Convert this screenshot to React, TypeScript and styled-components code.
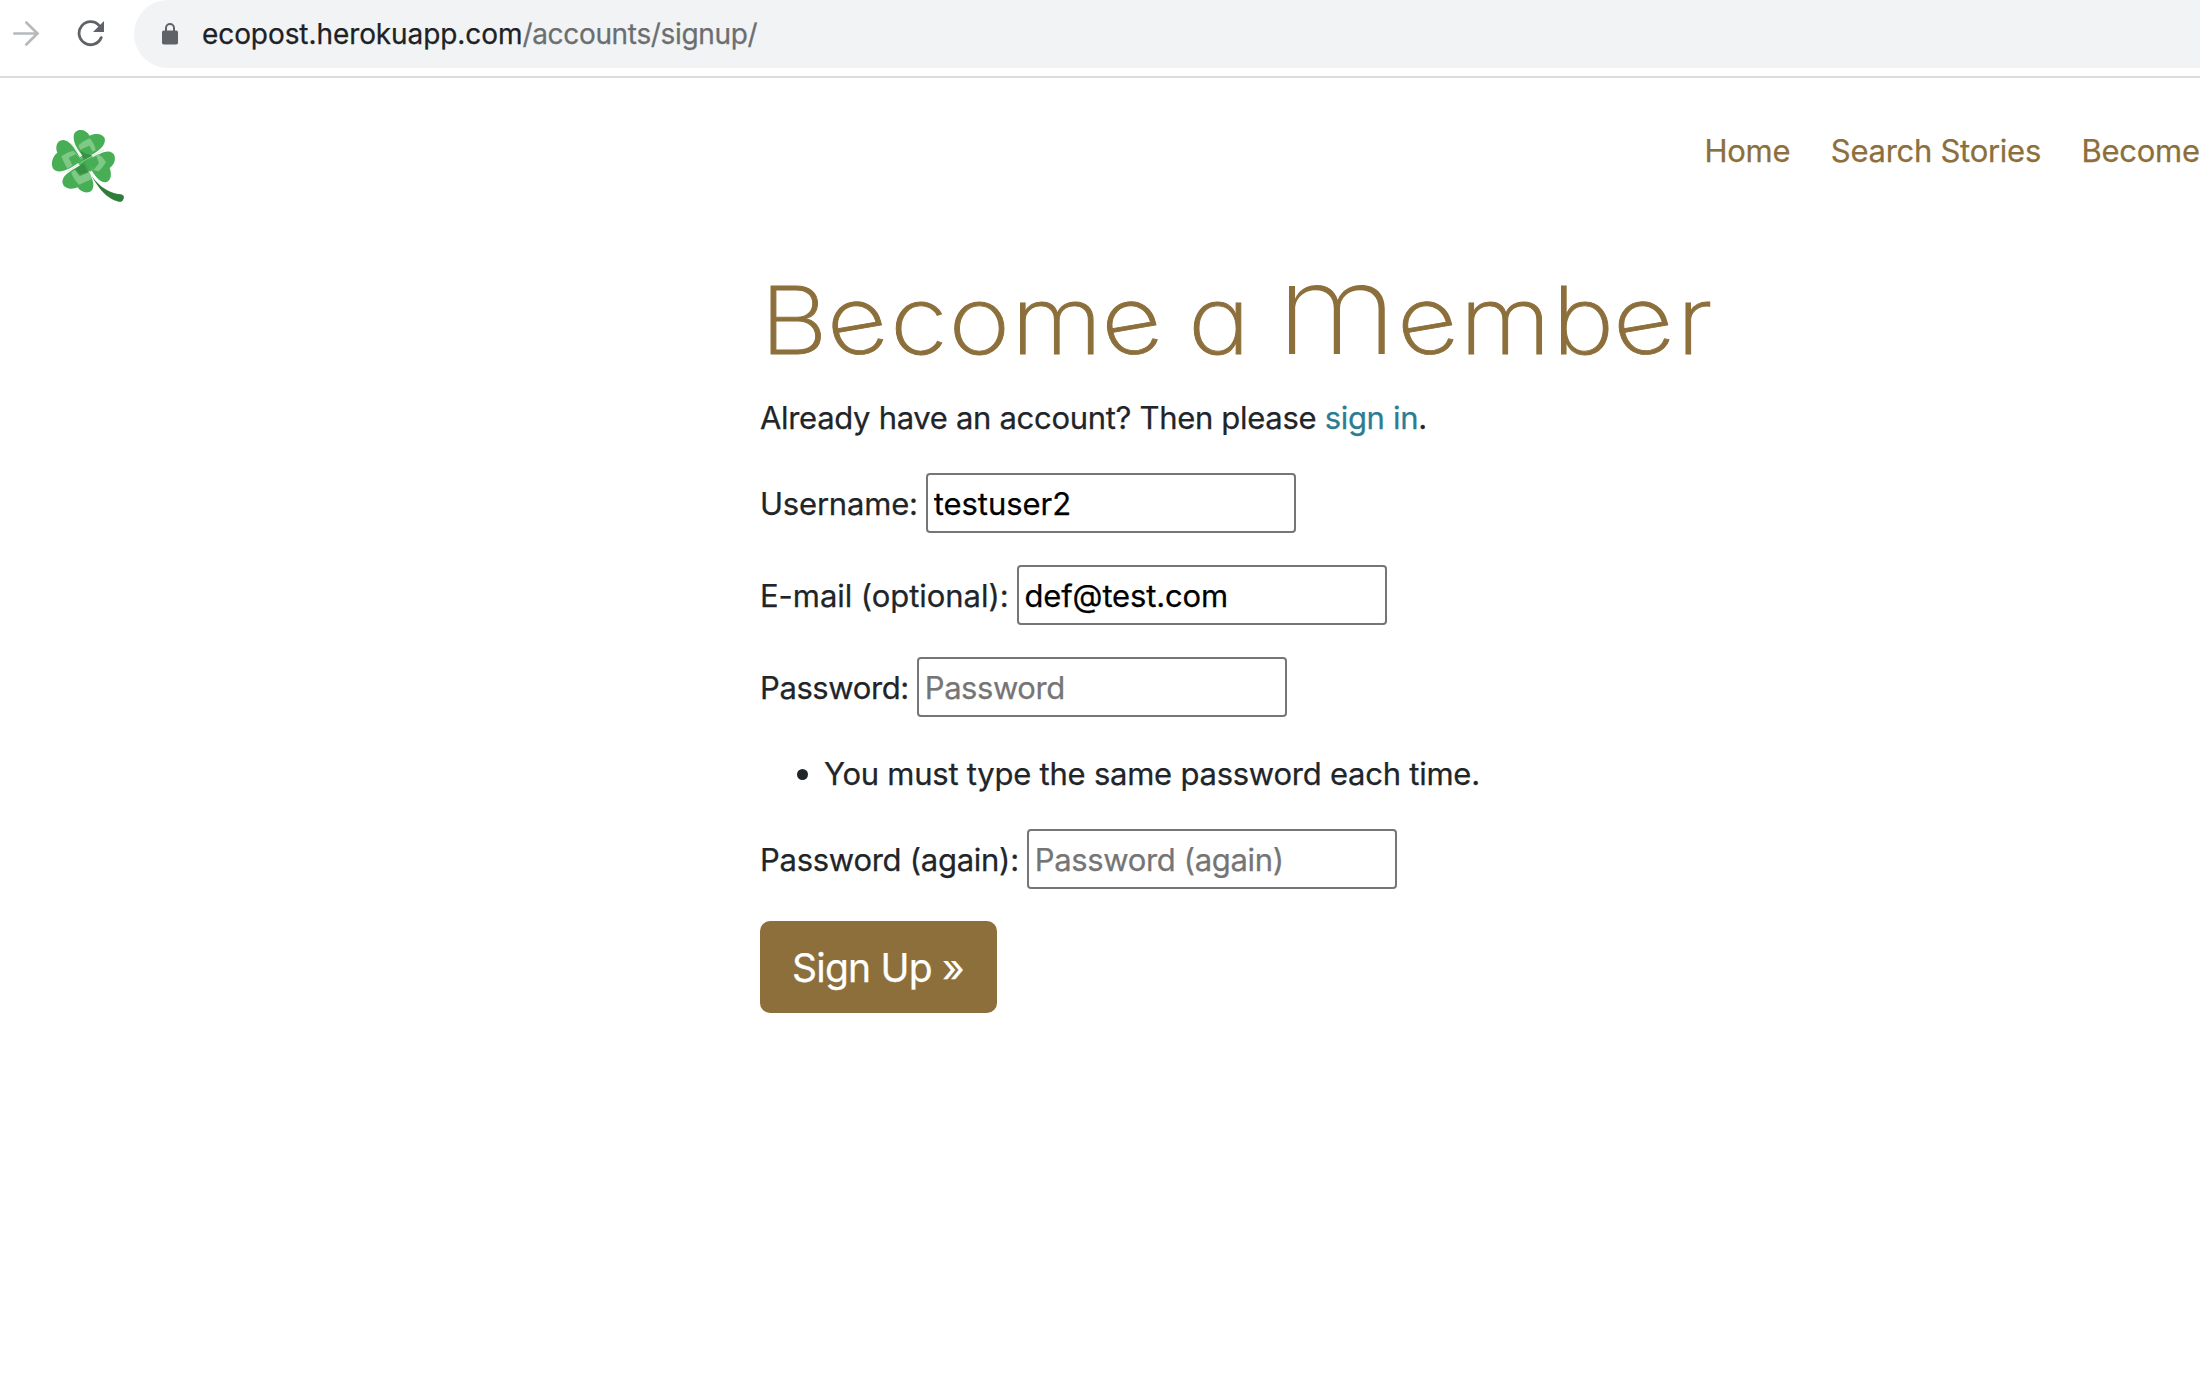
import React from "react";
import styled, { createGlobalStyle } from "styled-components";

const GOLD = "#8c6f3b";

const GlobalStyle = createGlobalStyle`
  *, *::before, *::after { box-sizing: border-box; }
  html, body { margin: 0; background: #fff; overflow: hidden; }
  body {
    color: #212529;
    font-family: Inter, "Liberation Sans", sans-serif;
    font-size: 31px;
    line-height: 48px;
    -webkit-text-stroke: 0.25px currentColor;
  }
`;

const Page = styled.div`
  display: flex;
  flex-direction: column;
  width: 2200px;
  height: 1390px;
  overflow: hidden;
`;

const Toolbar = styled.div`
  display: flex;
  align-items: flex-start;
  height: 78px;
  border-bottom: 2px solid #dadcdd;
`;

const ToolbarIcon = styled.svg<{ $gap: number }>`
  flex: none;
  width: 28px;
  height: 28px;
  margin: 20px 0 0 ${(p) => p.$gap}px;
`;

const AddressBar = styled.div`
  display: flex;
  flex: 1;
  align-items: center;
  height: 68px;
  margin-left: 29px;
  padding-left: 28px;
  border-radius: 34px 0 0 34px;
  background: #f1f3f5;
  font-size: 28px;
  line-height: 68px;
  white-space: nowrap;
`;

const LockIcon = styled.svg`
  width: 16px;
  height: 22px;
  margin-right: 24px;
`;

const Host = styled.span`
  color: #202124;
  letter-spacing: -0.08px;
`;

const Path = styled.span`
  color: #6b6e71;
  letter-spacing: -0.33px;
`;

const Header = styled.header`
  display: flex;
  justify-content: space-between;
  height: 184px;
`;

const Clover = styled.svg`
  width: 120px;
  height: 110px;
  margin: 32px 0 0 30px;
`;

const Nav = styled.nav`
  display: flex;
  gap: 40.5px;
  width: 495.5px;
  padding-top: 49px;
  white-space: nowrap;
`;

const NavLink = styled.a`
  color: ${GOLD};
  letter-spacing: -0.27px;
`;

const Main = styled.main`
  display: flex;
  flex-direction: column;
  align-items: flex-start;
  padding-left: 760px;
`;

const Title = styled.h1`
  margin: 1px 0 16px;
  color: ${GOLD};
  font-size: 94px;
  font-weight: 200;
  line-height: 115px;
  font-feature-settings: "cv11";
  letter-spacing: 0.7px;
  word-spacing: -6.3px;
  white-space: nowrap;
  -webkit-text-stroke: 0.9px ${GOLD};
  transform: scaleX(1.12);
  transform-origin: 0 0;
`;

const TiltedLetter = styled.span`
  display: inline-block;
  transform: rotate(-11deg);
  transform-origin: 46% 62%;
`;

const RoundCapital = styled.span`
  margin-left: 2px;
  font-size: 124px;
  font-weight: 200;
  line-height: 0;
  text-transform: lowercase;
  -webkit-text-stroke: 0;
`;

const Intro = styled.p`
  margin: 0 0 31px;
  letter-spacing: -0.31px;
`;

const Link = styled.a`
  color: #2c7d92;
`;

const Field = styled.div`
  display: flex;
  align-items: center;
  gap: 8px;
  margin-bottom: 32px;
  white-space: nowrap;
`;

const Label = styled.label<{ $tracking: number }>`
  padding-top: 1px;
  letter-spacing: ${(p) => p.$tracking}px;
`;

const Input = styled.input<{ $tracking: number }>`
  width: 370px;
  height: 60px;
  padding: 0 6px;
  border: 2px solid #767676;
  border-radius: 4px;
  background: #fff;
  color: #000;
  font: inherit;
  letter-spacing: ${(p) => p.$tracking}px;
  outline: none;

  &::placeholder {
    color: #757575;
    opacity: 1;
  }
`;

const Hints = styled.ul`
  margin: 0 0 32px;
  padding: 0;
  list-style: none;
`;

const Hint = styled.li`
  display: flex;
  align-items: center;
  height: 48px;
  padding: 1px 0 0 37px;
  letter-spacing: -0.24px;

  &::before {
    content: "";
    width: 11px;
    height: 11px;
    margin: 2px 16px 0 0;
    border-radius: 50%;
    background: #212529;
  }
`;

const SubmitButton = styled.button`
  width: 237px;
  height: 92px;
  padding: 2px 1px 0 0;
  border: 0;
  border-radius: 10px;
  background: ${GOLD};
  color: #fff;
  font-family: inherit;
  font-size: 39px;
  line-height: 60px;
  letter-spacing: -0.8px;
`;

const E = () => <TiltedLetter>e</TiltedLetter>;

function CloverLogo() {
  return (
    <Clover viewBox="0 0 360 330" aria-hidden="true">
      <g fill="#48ae56">
        <path d="M164 143C147 125 129 101 131 77C134 55 167 53 179 77C193 69 218 70 224 85C230 105 204 130 164 143Z" />
        <path d="M157 150C141 134 126 91 99 90C80 91 75 112 82 128C67 139 61 162 70 177C86 195 122 177 157 150Z" />
        <path d="M169 151C193 144 215 122 240 125C260 130 260 159 239 174C246 193 243 211 230 216C208 222 188 191 169 151Z" />
        <path d="M160 160C130 179 99 192 97 215C99 237 126 240 143 232C153 248 174 253 186 241C199 220 181 192 160 160Z" />
        <path d="M164 130L190 140L184 185L158 176L138 152Z" />
      </g>
      <g fill="#7fc987">
        <path d="M163 141L145 109Q149 98 179 85Q194 101 197 120L163 141Z" />
        <path d="M155 148L130 122Q112 125 94 139Q101 158 112 176L155 148Z" />
        <path d="M174 149L203 133Q214 137 228 156Q219 172 206 184L188 180L174 149Z" />
        <path d="M160 163L124 187Q130 208 147 224L186 207L181 194L160 163Z" />
      </g>
      <g fill="#48ae56">
        <path d="M163 142L151 119L178 107L188 125Z" />
        <path d="M154 150L138 132L116 143L127 166Z" />
        <path d="M170 151L199 138L207 160L190 181Z" />
        <path d="M160 163L135 180L149 199L177 187Z" />
      </g>
      <path d="M163 151L149 121L167 131L187 136Z" fill="#389145" />
      <path d="M160 160L135 178L150 194L175 186Z" fill="#389145" />
      <path
        d="M163 151L222 119M163 151L112 186M157 146L124 100"
        stroke="#b5dfb9"
        strokeWidth="3"
        opacity=".6"
      />
      <path
        d="M160 152C176 185 202 239 263 252Q282 251 282 263Q277 280 262 274C211 257 190 205 160 152Z"
        fill="#2e7d38"
      />
    </Clover>
  );
}

export default function App() {
  return (
    <Page>
      <GlobalStyle />
      <Toolbar>
        <ToolbarIcon
          $gap={12}
          viewBox="0 0 28 28"
          fill="none"
          stroke="#b7babd"
          strokeWidth="2.7"
          strokeLinecap="round"
        >
          <path d="M2.3 13.5H25.5M14.3 2.5L25.5 13.5L14.3 24.5" />
        </ToolbarIcon>
        <ToolbarIcon $gap={37} viewBox="0 0 28 28" fill="none">
          <path
            d="M22.2 5.6A11.5 11.5 0 1 0 24.2 17.6"
            stroke="#5f6368"
            strokeWidth="2.8"
            strokeLinecap="round"
          />
          <path d="M27 1V12H16Z" fill="#5f6368" />
        </ToolbarIcon>
        <AddressBar>
          <LockIcon viewBox="0 0 16 22" fill="none">
            <rect y="7.5" width="16" height="14" rx="1.8" fill="#5f6368" />
            <path d="M4 8V5a4 4 0 0 1 8 0V8" stroke="#5f6368" strokeWidth="2" />
          </LockIcon>
          <Host>ecopost.herokuapp.com</Host>
          <Path>/accounts/signup/</Path>
        </AddressBar>
      </Toolbar>
      <Header>
        <CloverLogo />
        <Nav>
          <NavLink>Home</NavLink>
          <NavLink>Search Stories</NavLink>
          <NavLink>Become</NavLink>
        </Nav>
      </Header>
      <Main>
        <Title>
          B<E />com<E /> a <RoundCapital>M</RoundCapital>
          <E />mb<E />r
        </Title>
        <Intro>
          Already have an account? Then please <Link>sign in</Link>.
        </Intro>
        <Field>
          <Label $tracking={-0.2}>Username:</Label>
          <Input $tracking={-0.05} defaultValue="testuser2" />
        </Field>
        <Field>
          <Label $tracking={-0.05}>E-mail (optional):</Label>
          <Input $tracking={-0.15} defaultValue="def@test.com" />
        </Field>
        <Field>
          <Label $tracking={-0.4}>Password:</Label>
          <Input $tracking={-0.45} type="password" placeholder="Password" />
        </Field>
        <Hints>
          <Hint>You must type the same password each time.</Hint>
        </Hints>
        <Field>
          <Label $tracking={-0.27}>Password (again):</Label>
          <Input $tracking={-0.35} type="password" placeholder="Password (again)" />
        </Field>
        <SubmitButton type="button">Sign Up »</SubmitButton>
      </Main>
    </Page>
  );
}
